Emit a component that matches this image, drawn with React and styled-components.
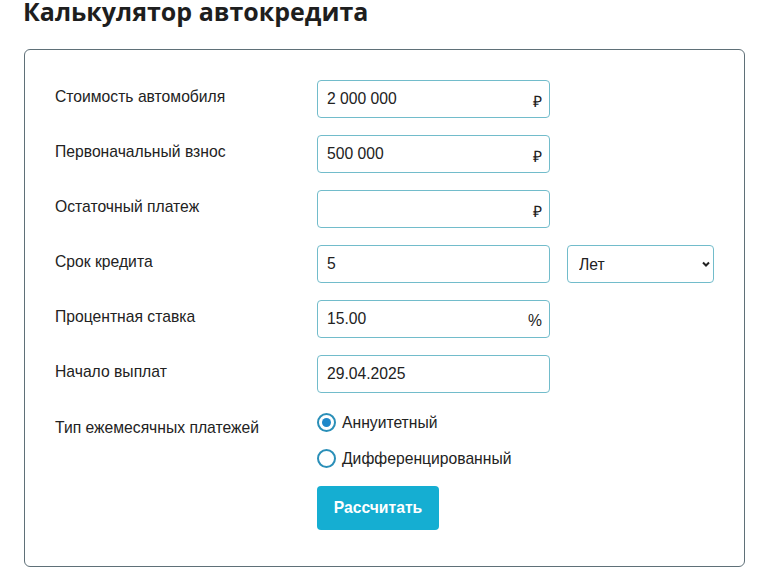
import React, { useState } from 'react';
import styled, { createGlobalStyle } from 'styled-components';

const Global = createGlobalStyle`
  body {
    margin: 0;
    background: #fff;
    font-family: "Liberation Sans", Arial, sans-serif;
    color: #222;
  }
`;

const Page = styled.div`
  padding: 0 0 0 23px;
`;

const Title = styled.h1`
  margin: 0;
  font-size: 25px;
  line-height: 22px;
  font-weight: 700;
  color: #1e1e1e;
  font-family: "Open Sans", "Liberation Sans", sans-serif;
`;

const Card = styled.div`
  margin-top: 27px;
  margin-left: 1px;
  width: 721px;
  box-sizing: border-box;
  border: 1px solid #5f7078;
  border-radius: 6px;
  padding: 30px 30px 36px;
  display: flex;
  flex-direction: column;
  gap: 17px;
`;

const Row = styled.div`
  display: flex;
  align-items: ${p => (p.$top ? 'flex-start' : 'center')};
  gap: 17px;
`;

const Label = styled.div`
  width: 245px;
  font-size: 15.7px;
  color: #222;
  margin-top: ${p => p.$offset || 0}px;
`;

const Field = styled.div`
  position: relative;
  width: 233px;
`;

const Input = styled.input`
  width: 100%;
  height: 38px;
  box-sizing: border-box;
  border: 1px solid #72bccb;
  border-radius: 4px;
  padding: 0 30px 0 9px;
  font-size: 15.7px;
  font-family: "Liberation Sans", Arial, sans-serif;
  color: #222;
  outline: none;
`;

const Unit = styled.span`
  position: absolute;
  right: 8px;
  top: 50%;
  transform: translateY(-40%);
  font-size: 15.7px;
  color: #222;
  pointer-events: none;
`;

const SelectWrap = styled.div`
  position: relative;
  width: 147px;
`;

const Select = styled.select`
  appearance: none;
  width: 100%;
  height: 38px;
  box-sizing: border-box;
  border: 1px solid #72bccb;
  border-radius: 4px;
  padding: 0 24px 0 11px;
  font-size: 15.7px;
  font-family: "Liberation Sans", Arial, sans-serif;
  color: #222;
  background: #fff;
  outline: none;
`;

const Chevron = styled.svg`
  position: absolute;
  right: 3px;
  top: 15px;
  pointer-events: none;
`;

const Radios = styled.div`
  display: flex;
  flex-direction: column;
  gap: 17px;
  padding-top: 3px;
`;

const RadioLabel = styled.label`
  display: flex;
  align-items: center;
  gap: 6px;
  font-size: 15.7px;
  line-height: 19px;
  color: #222;
  cursor: pointer;
`;

const Circle = styled.span`
  width: 19px;
  height: 19px;
  box-sizing: border-box;
  border-radius: 50%;
  border: 2px solid #2a8fb8;
  display: flex;
  align-items: center;
  justify-content: center;
  &::after {
    content: '';
    width: 9px;
    height: 9px;
    border-radius: 50%;
    background: ${p => (p.$on ? '#1f88c9' : 'transparent')};
  }
`;

const HiddenRadio = styled.input`
  display: none;
`;

const Button = styled.button`
  margin-top: 1px;
  width: 122px;
  height: 44px;
  border: none;
  border-radius: 4px;
  background: #15aed2;
  color: #fff;
  font-size: 15.7px;
  font-weight: 700;
  font-family: "Liberation Sans", Arial, sans-serif;
  cursor: pointer;
`;

const rows = [
  { label: 'Стоимость автомобиля', value: '2 000 000', unit: '₽' },
  { label: 'Первоначальный взнос', value: '500 000', unit: '₽' },
  { label: 'Остаточный платеж', value: '', unit: '₽' },
];

export default function App() {
  const [type, setType] = useState('annuity');

  return (
    <Page>
      <Global />
      <Title>Калькулятор автокредита</Title>
      <Card>
        {rows.map(r => (
          <Row key={r.label}>
            <Label $offset={-4}>{r.label}</Label>
            <Field>
              <Input defaultValue={r.value} />
              <Unit>{r.unit}</Unit>
            </Field>
          </Row>
        ))}
        <Row>
          <Label $offset={-4}>Срок кредита</Label>
          <Field>
            <Input defaultValue="5" />
          </Field>
          <SelectWrap>
            <Select defaultValue="years">
              <option value="years">Лет</option>
              <option value="months">Месяцев</option>
            </Select>
            <Chevron width="10" height="8" viewBox="0 0 10 8">
              <path d="M2 2.5 L5 5.5 L8 2.5" fill="none" stroke="#222" strokeWidth="2" />
            </Chevron>
          </SelectWrap>
        </Row>
        <Row>
          <Label $offset={-4}>Процентная ставка</Label>
          <Field>
            <Input defaultValue="15.00" />
            <Unit>%</Unit>
          </Field>
        </Row>
        <Row>
          <Label $offset={-4}>Начало выплат</Label>
          <Field>
            <Input defaultValue="29.04.2025" />
          </Field>
        </Row>
        <Row $top>
          <Label $offset={9}>Тип ежемесячных платежей</Label>
          <Radios>
            <RadioLabel>
              <HiddenRadio type="radio" name="t" checked={type === 'annuity'} onChange={() => setType('annuity')} />
              <Circle $on={type === 'annuity'} />
              Аннуитетный
            </RadioLabel>
            <RadioLabel>
              <HiddenRadio type="radio" name="t" checked={type === 'diff'} onChange={() => setType('diff')} />
              <Circle $on={type === 'diff'} />
              Дифференцированный
            </RadioLabel>
          </Radios>
        </Row>
        <Row>
          <Label />
          <Button>Рассчитать</Button>
        </Row>
      </Card>
    </Page>
  );
}
